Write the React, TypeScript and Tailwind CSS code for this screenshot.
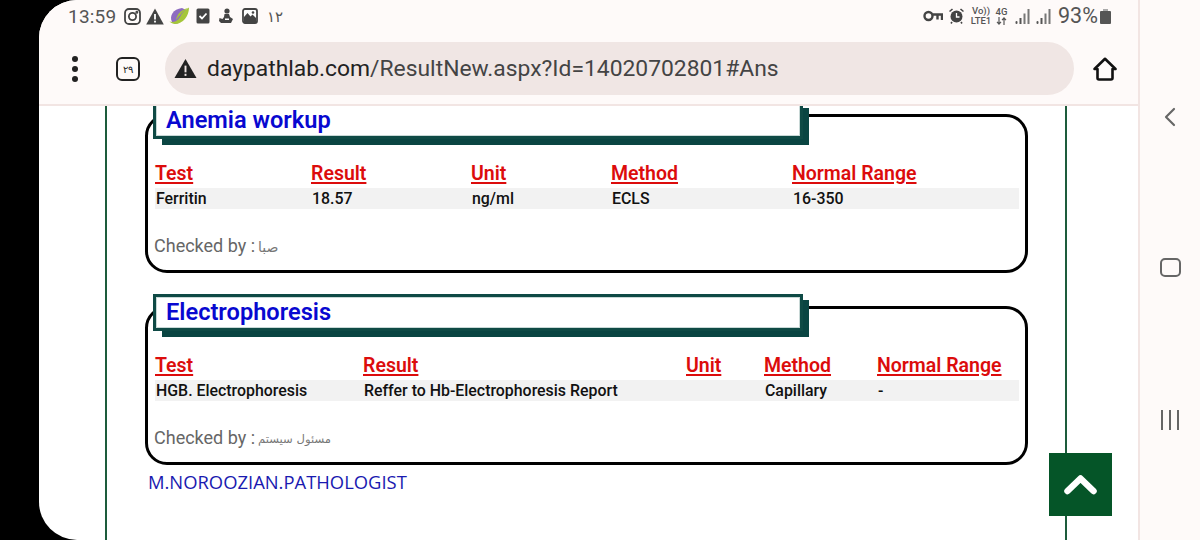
import React from "react";
import { ChevronLeft } from "lucide-react";

type Row = { label: string; width: string };

const Signal = ({ className = "" }: { className?: string }) => (
  <svg width="15" height="17" viewBox="0 0 15 17" className={className}>
    <rect x="0.5" y="13" width="2" height="3" rx="1" fill="#555" />
    <rect x="4.5" y="10" width="2" height="6" fill="#555" />
    <rect x="8.5" y="5.5" width="2" height="10.5" fill="#777" />
    <rect x="12.5" y="1" width="2" height="15" fill="#777" />
  </svg>
);

const StatusLeft = () => (
  <div className="flex items-center">
    <span className="text-[19px] leading-none text-[#555] w-[56px] tracking-[0.2px]">13:59</span>
    {/* instagram */}
    <svg width="17" height="17" viewBox="0 0 17 17" fill="none" stroke="#444" strokeWidth="1.8">
      <rect x="1" y="1" width="15" height="15" rx="4" />
      <circle cx="8.5" cy="8.5" r="3.6" />
      <circle cx="12.8" cy="4.2" r="0.6" fill="#444" />
    </svg>
    {/* warning */}
    <svg width="18" height="17" viewBox="0 0 18 17" className="ml-[5px]">
      <path d="M9 0.5 L17.8 16.5 H0.2 Z" fill="#444" />
      <rect x="8.1" y="6" width="1.8" height="5.5" fill="#fff" />
      <rect x="8.1" y="12.7" width="1.8" height="1.8" fill="#fff" />
    </svg>
    {/* leaf app */}
    <svg width="20" height="18" viewBox="0 0 20 18" className="ml-[5px]">
      <path d="M3 15 C0 9 4 2 13 1 L17 3 C16 10 12 16 6 17 Z" fill="#8e6cc0" />
      <path d="M0.5 14.5 C6 16 10 13 12 8 C14 5 16 3 20 0.5 C20 9 14 17 6 17 C4 17 2 16 0.5 14.5 Z" fill="#a5c63a" />
      <path d="M7 13 C8 7 12 3 19 1 C14 4 11 8 7 13 Z" fill="#a5c63a" />
    </svg>
    {/* check box */}
    <svg width="14" height="16" viewBox="0 0 14 16" className="ml-[7px]">
      <rect x="0.5" y="0.5" width="13" height="15" rx="1.5" fill="#444" />
      <path d="M3.5 8 L6 10.5 L10.5 5.5" stroke="#fff" strokeWidth="1.8" fill="none" />
    </svg>
    {/* figure */}
    <svg width="16" height="16" viewBox="0 0 16 16" className="ml-[8px]" fill="#444">
      <circle cx="9" cy="3" r="2.6" />
      <path d="M6.5 6 H11 L12 9 L15 11 L13 15 H3 L1 13 L1.5 10 L4.5 11 L6 9 Z" />
      <rect x="7" y="10.5" width="4" height="1.5" fill="#fff" />
    </svg>
    {/* picture */}
    <svg width="16" height="16" viewBox="0 0 16 16" className="ml-[8px]">
      <rect x="1" y="1" width="14" height="14" rx="2" fill="#fff" stroke="#444" strokeWidth="1.8" />
      <path d="M2 9 L5.5 5 L8.5 8.5 L10.5 6.5 L14 10 V14 H2 Z" fill="#444" />
      <circle cx="11" cy="4.5" r="1.3" fill="#444" />
    </svg>
    <span className="ml-[9px] text-[15px] leading-none text-[#555] [font-family:'Noto_Sans',sans-serif]">۱۲</span>
  </div>
);

const StatusRight = () => (
  <div className="flex items-center">
    {/* key */}
    <svg width="20" height="12" viewBox="0 0 20 12" fill="none" stroke="#444" strokeWidth="2.4">
      <circle cx="5.5" cy="6" r="4" />
      <path d="M9.5 4.5 H19 V10 M14.5 4.5 V9.5" />
    </svg>
    {/* alarm */}
    <svg width="15" height="16" viewBox="0 0 15 16" className="ml-[6px]">
      <circle cx="7.5" cy="8.5" r="6" fill="#444" />
      <path d="M7.5 5 V9 H10.5" stroke="#fff" strokeWidth="1.3" fill="none" />
      <path d="M0.5 3.5 L3.5 1 M14.5 3.5 L11.5 1 M3 14 L2 15.5 M12 14 L13 15.5" stroke="#444" strokeWidth="1.6" />
    </svg>
    <div className="ml-[8px] w-[18px] flex flex-col items-center text-[9.5px] leading-[10px] font-medium text-[#555]">
      <span>Vo))</span>
      <span>LTE1</span>
    </div>
    <div className="ml-[6px] w-[11px] flex flex-col items-center text-[9.5px] leading-[10px] font-medium text-[#555]">
      <span>4G</span>
      {/* data arrows */}
      <svg width="11" height="8" viewBox="0 0 11 8" fill="none" stroke="#555" strokeWidth="1.2">
        <path d="M3 0 V7 M1 4.8 L3 7 L5 4.8 M8 8 V1 M6 3.2 L8 1 L10 3.2" />
      </svg>
    </div>
    <Signal className="ml-[8px]" />
    <Signal className="ml-[6px]" />
    <span className="ml-[7px] w-[39px] text-[21.5px] leading-none text-[#555]">93%</span>
    <div className="ml-[3px] flex flex-col items-center">
      <div className="w-[5px] h-[2px] bg-[#aaa]" />
      <div className="w-[11px] h-[13px] bg-[#555] rounded-[1px]" />
    </div>
  </div>
);

const Cell = ({ label, width, head }: Row & { head?: boolean }) => (
  <div
    className={
      head
        ? "shrink-0 text-[19.5px] leading-[24px] font-semibold text-[#dc0c0c] underline decoration-2 underline-offset-2"
        : "shrink-0 pl-px text-[15.9px] leading-[20px] font-medium text-[#111]"
    }
    style={{ width }}
  >
    {label}
  </div>
);

const Card = ({
  title,
  columns,
  values,
  checkedBy,
  arabicSize,
  top,
}: {
  title: string;
  columns: Row[];
  values: string[];
  checkedBy: string;
  arabicSize: string;
  top: string;
}) => (
  <div className={`relative ml-[38px] mr-[37px] h-[159px] rounded-[22px] border-[3px] border-black bg-white ${top}`}>
    {/* title plate: dark frame, thin light ring, hard shadow on two sides */}
    <div className="absolute left-[5px] top-[-15px] w-[650px] h-[37px] bg-white border-[3px] border-[#0f4a45] [box-shadow:inset_0_0_0_1px_#c8d8d6] flex items-center">
      <div className="pl-[10px] pb-[2px] text-[23.6px] leading-[30px] font-semibold text-[#0808d0]">{title}</div>
    </div>
    <div className="absolute left-[14px] top-[22px] w-[647px] h-[6px] bg-[#0a4542]" />
    <div className="absolute left-[655px] top-[-9px] w-[6px] h-[31px] bg-[#0a4542]" />
    <div className="flex flex-col pl-[7px] pr-[6px] pt-[45px]">
      <div className="flex mb-[2px]">
        {columns.map((c) => (
          <Cell key={c.label} {...c} head />
        ))}
      </div>
      <div className="flex bg-[#f2f2f2] h-[21px] items-center">
        {columns.map((c, i) => (
          <Cell key={c.label} label={values[i]} width={c.width} />
        ))}
      </div>
      <div className="mt-[23px] -ml-px flex items-center text-[18px] leading-[24px] text-[#666]">
        <span>Checked by :</span>
        <span dir="rtl" className={`ml-[3px] mt-[3px] ${arabicSize} [font-family:'DejaVu_Sans',sans-serif] text-[#777]`}>
          {checkedBy}
        </span>
      </div>
    </div>
  </div>
);

export default function App() {
  return (
    <div className="flex w-[1200px] h-[540px] overflow-hidden bg-black [font-family:Roboto,sans-serif]">
      <div className="w-[39px] shrink-0" />
      <div className="flex-1 flex flex-col bg-white rounded-l-[38px] overflow-hidden">
        <div className="relative z-10 h-[106px] shrink-0 bg-[#fefaf9] border-b-2 border-[#f2e5e3] flex flex-col">
          <div className="flex items-center justify-between h-[32px] pl-[29px] pr-[27px]">
            <StatusLeft />
            <StatusRight />
          </div>
          <div className="flex items-center mt-[10px]">
            <div className="w-[126px] flex items-center shrink-0">
              <div className="ml-[33px] flex flex-col gap-[4px]">
                <div className="w-[6px] h-[6px] rounded-full bg-[#222]" />
                <div className="w-[6px] h-[6px] rounded-full bg-[#222]" />
                <div className="w-[6px] h-[6px] rounded-full bg-[#222]" />
              </div>
              <div className="ml-[38px] w-[24px] h-[24px] rounded-[6px] border-[2.5px] border-[#222] flex items-center justify-center text-[10px] leading-none text-[#222] [font-family:'Noto_Sans',sans-serif]">
                ۲۹
              </div>
            </div>
            <div className="w-[909px] h-[53px] rounded-full bg-[#f0e6e4] flex items-center pl-[9px] shrink-0">
              <svg width="23" height="21" viewBox="0 0 24 21">
                <path d="M12 0.5 L23.5 20.5 H0.5 Z" fill="#222" />
                <rect x="11" y="7.5" width="2" height="7" fill="#f0e6e4" />
                <rect x="11" y="16" width="2" height="2.2" fill="#f0e6e4" />
              </svg>
              <span className="ml-[10px] mt-[1px] text-[22.85px] leading-none text-[#222]">
                daypathlab.com<span className="text-[#444]">/ResultNew.aspx?Id=14020702801#Ans</span>
              </span>
            </div>
            <svg width="24" height="24" viewBox="0 0 24 24" fill="none" stroke="#111" strokeWidth="2.6" strokeLinejoin="round" className="ml-[19px]">
              <path d="M1.5 12 L12 1.8 L22.5 12 H19.5 V21 Q19.5 22.5 18 22.5 H6 Q4.5 22.5 4.5 21 V12 Z" />
            </svg>
          </div>
        </div>
        <div className="flex-1 overflow-hidden">
          <div className="ml-[66px] mr-[71px] h-full border-x-2 border-[#1d5c3c] pt-[8px] relative">
            <Card
              top="mt-0"
              title="Anemia workup"
              arabicSize="text-[14px]"
              columns={[
                { label: "Test", width: "156px" },
                { label: "Result", width: "160px" },
                { label: "Unit", width: "140px" },
                { label: "Method", width: "181px" },
                { label: "Normal Range", width: "226px" },
              ]}
              values={["Ferritin", "18.57", "ng/ml", "ECLS", "16-350"]}
              checkedBy="صبا"
            />
            <Card
              top="mt-[33px]"
              title="Electrophoresis"
              arabicSize="text-[11.6px]"
              columns={[
                { label: "Test", width: "208px" },
                { label: "Result", width: "323px" },
                { label: "Unit", width: "78px" },
                { label: "Method", width: "113px" },
                { label: "Normal Range", width: "141px" },
              ]}
              values={["HGB. Electrophoresis", "Reffer to Hb-Electrophoresis Report", "", "Capillary", "-"]}
              checkedBy="مسئول سیستم"
            />
            <div className="ml-[41px] mt-[5px] text-[18.4px] leading-[24px] text-[#1a1ab0] [font-family:'Open_Sans',sans-serif]">
              M.NOROOZIAN.PATHOLOGIST
            </div>
            <button className="absolute left-[942px] top-[347px] w-[63px] h-[63px] bg-[#055528] flex items-center justify-center">
              <svg width="33" height="21" viewBox="0 0 33 21" fill="none" stroke="#fff" strokeWidth="6.5" strokeLinecap="round" strokeLinejoin="round" className="mb-[1px]">
                <path d="M3.5 17 L16.5 4.5 L29.5 17" />
              </svg>
            </button>
          </div>
        </div>
      </div>
      <div className="w-[62px] shrink-0 bg-[#fefaf9] border-l-2 border-[#f2e5e3] flex flex-col items-center text-[#666]">
        <ChevronLeft size={32} strokeWidth={1.6} className="mt-[101px]" />
        <div className="mt-[125px] w-[21px] h-[19px] rounded-[5px] border-2 border-[#666]" />
        <div className="mt-[133px] flex gap-[6px]">
          <div className="w-[2px] h-[20px] bg-[#666]" />
          <div className="w-[2px] h-[20px] bg-[#666]" />
          <div className="w-[2px] h-[20px] bg-[#666]" />
        </div>
      </div>
    </div>
  );
}
